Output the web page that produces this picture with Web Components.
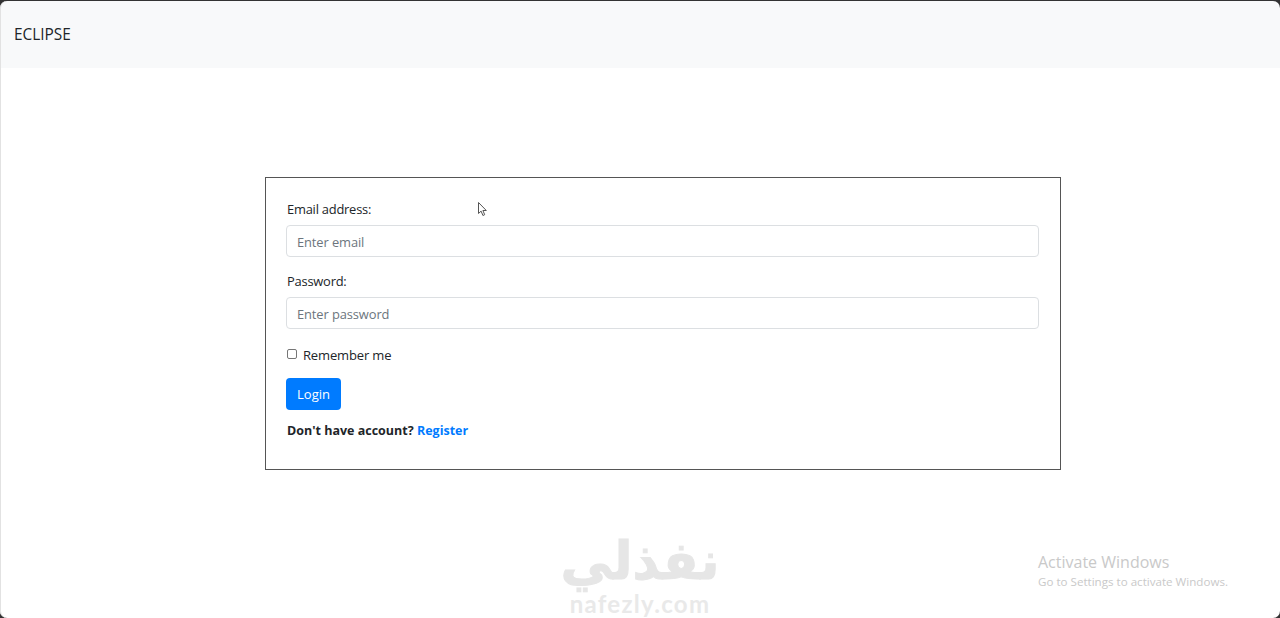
<!DOCTYPE html>
<html lang="en">
<head>
<meta charset="utf-8">
<title>ECLIPSE</title>
<style>
  html, body { margin: 0; height: 100%; background: #fff; }
  body { font-family: "Open Sans", "Noto Sans", sans-serif; color: #212529; overflow: hidden; position: relative; }
</style>
</head>
<body>
<app-navbar>ECLIPSE</app-navbar>
<login-card></login-card>
<nafezly-mark></nafezly-mark>
<activate-note></activate-note>
<mouse-cursor></mouse-cursor>
<window-frame></window-frame>

<script>
class AppNavbar extends HTMLElement {
  constructor() {
    super();
    this.attachShadow({ mode: "open" });
    this.shadowRoot.innerHTML = `
      <style>
        :host { display: flex; align-items: center; height: 68px; padding-left: 14px; padding-top: 1px; box-sizing: border-box;
          background: #f8f9fa; font-size: 15.4px; color: #212529; }
      </style>
      <slot></slot>
    `;
  }
}

class FormField extends HTMLElement {
  constructor() {
    super();
    this.attachShadow({ mode: "open" });
    this.shadowRoot.innerHTML = `
      <style>
        :host { display: block; margin-bottom: 14px; }
        label { display: block; font-size: 12.9px; letter-spacing: -0.22px; line-height: 20px; margin-bottom: 6px; color: #212529; padding-left: 1px; }
        input { display: block; width: 100%; height: 32px; box-sizing: border-box; padding: 1px 10px 0;
          border: 1px solid #dcdfe2; border-radius: 4px; background: #fff; outline: 0;
          font: 12.9px "Open Sans", "Noto Sans", sans-serif; letter-spacing: -0.1px; color: #495057; }
        input::placeholder { color: #6c757d; opacity: 1; }
      </style>
      <label></label>
      <input>
    `;
    this.shadowRoot.querySelector("label").textContent = this.getAttribute("label");
    const input = this.shadowRoot.querySelector("input");
    input.type = this.getAttribute("type") || "text";
    input.placeholder = this.getAttribute("placeholder") || "";
  }
}

class LoginCard extends HTMLElement {
  constructor() {
    super();
    this.attachShadow({ mode: "open" });
    this.shadowRoot.innerHTML = `
      <style>
        :host { display: block; box-sizing: border-box; width: 796px; height: 293px; margin: 109px 0 0 265px;
          padding: 21px 21px 0 20px; border: 1px solid #555; font-size: 13px; }
        .check { display: flex; align-items: center; height: 20px; margin-top: 16px; margin-bottom: 13px; letter-spacing: -0.15px; }
        .check input { width: 10px; height: 10px; margin: 0 6px 3px 1px; appearance: none; box-sizing: border-box;
          border: 1px solid #767676; border-radius: 2px; background: #fff; }
        button { display: block; height: 32px; width: 55px; padding: 0; border: 0; border-radius: 4px;
          background: #007bff; color: #fff; font: 13px "Open Sans", "Noto Sans", sans-serif; }
        p { margin: 11px 0 0 1px; line-height: 20px; font-weight: 700; color: #212529; font-size: 12.5px; }
        a { color: #007bff; text-decoration: none; }
      </style>
      <form-field label="Email address:" type="email" placeholder="Enter email"></form-field>
      <form-field label="Password:" type="password" placeholder="Enter password"></form-field>
      <div class="check"><input type="checkbox" id="remember"><label for="remember">Remember me</label></div>
      <button type="button">Login</button>
      <p>Don't have account? <a href="#">Register</a></p>
    `;
  }
}

class NafezlyMark extends HTMLElement {
  constructor() {
    super();
    this.attachShadow({ mode: "open" });
    this.shadowRoot.innerHTML = `
      <style>
        :host { position: absolute; left: 540px; top: 531px; width: 200px; text-align: center; color: #e6e6e6; pointer-events: none; }
        .ar { font: 700 52px/60px "DejaVu Sans", sans-serif; white-space: nowrap; -webkit-text-stroke: 1px #e6e6e6; }
        .en { font: 700 24px/26px "Lato", "Open Sans", sans-serif; letter-spacing: 1.3px; margin-top: 0; color: #e9e9e9; }
      </style>
      <div class="ar" dir="rtl" lang="ar">نفذلي</div>
      <div class="en">nafezly.com</div>
    `;
  }
}

class ActivateNote extends HTMLElement {
  constructor() {
    super();
    this.attachShadow({ mode: "open" });
    this.shadowRoot.innerHTML = `
      <style>
        :host { position: absolute; left: 1038px; top: 552px; color: #c9c9c9; pointer-events: none; white-space: nowrap; }
        .a { font-size: 16px; line-height: 20px; }
        .b { font-size: 11.6px; line-height: 18px; margin-top: 1px; }
      </style>
      <div class="a">Activate Windows</div>
      <div class="b">Go to Settings to activate Windows.</div>
    `;
  }
}

class MouseCursor extends HTMLElement {
  constructor() {
    super();
    this.attachShadow({ mode: "open" });
    this.shadowRoot.innerHTML = `
      <style>
        :host { position: absolute; left: 478px; top: 202px; width: 10px; height: 15px; line-height: 0; }
      </style>
      <svg width="10" height="15" viewBox="0 0 10 15">
        <path d="M.5.5v11l2.6-2.4 1.8 4.4 1.8-.8-1.8-4.2h3.4z" fill="#fff" stroke="#555" stroke-width="1"/>
      </svg>
    `;
  }
}

// rounded window edge of the captured desktop, lies over the page
class WindowFrame extends HTMLElement {
  constructor() {
    super();
    this.attachShadow({ mode: "open" });
    this.shadowRoot.innerHTML = `
      <style>
        :host { position: absolute; left: 0; right: 0; top: 1px; bottom: 0; border-radius: 7px; pointer-events: none;
          box-shadow: 0 0 0 8px #333, inset 1px 0 0 #e2e2e2; }
      </style>
    `;
  }
}

customElements.define("app-navbar", AppNavbar);
customElements.define("form-field", FormField);
customElements.define("login-card", LoginCard);
customElements.define("nafezly-mark", NafezlyMark);
customElements.define("activate-note", ActivateNote);
customElements.define("mouse-cursor", MouseCursor);
customElements.define("window-frame", WindowFrame);
</script>
</body>
</html>
